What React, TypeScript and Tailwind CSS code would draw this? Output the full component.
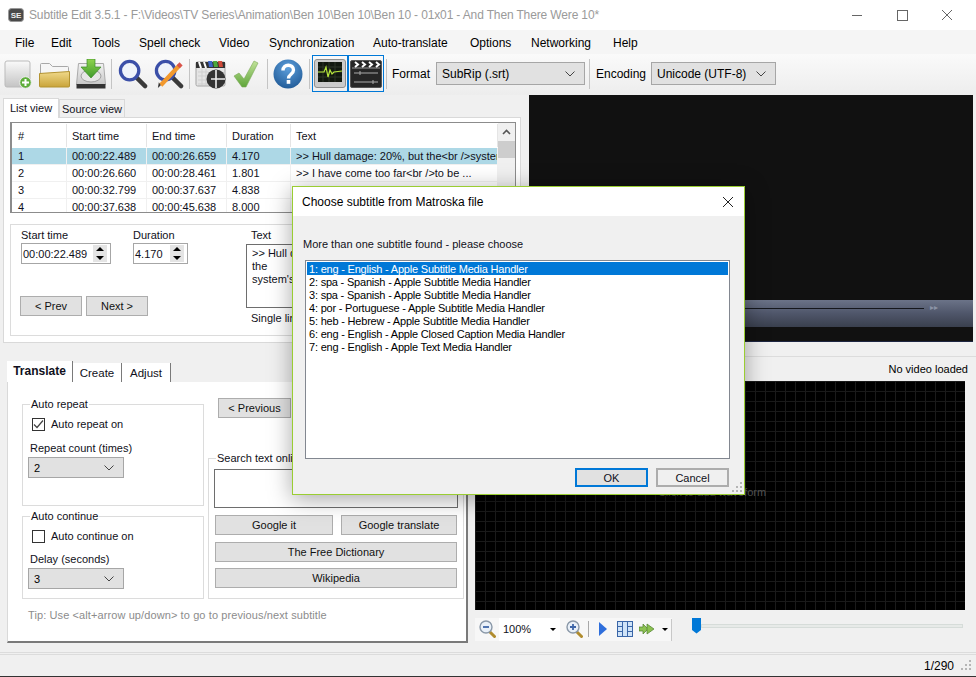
import type { ReactNode } from "react";

const font = "font-['Liberation_Sans',sans-serif]";

function Chevron({ className = "" }: { className?: string }) {
  return (
    <svg width="10" height="6" viewBox="0 0 10 6" className={className}>
      <path d="M0.5 0.5 L5 5 L9.5 0.5" fill="none" stroke="#444" strokeWidth="1" />
    </svg>
  );
}

function Select({ value, className }: { value: string; className: string }) {
  return (
    <div className={`flex items-center justify-between border border-[#a6a6a6] bg-[#e1e1e1] pl-[5px] pr-[9px] text-black ${className}`}>
      <span>{value}</span>
      <Chevron />
    </div>
  );
}

function Btn({ children, className }: { children: ReactNode; className: string }) {
  return (
    <div className={`flex h-[20px] items-center justify-center border border-[#adadad] bg-[#e1e1e1] text-[#111] ${className}`}>
      {children}
    </div>
  );
}

function Sep() {
  return <div className="h-[30px] w-px bg-[#c4c4c4]" />;
}

function Spin({ value, className }: { value: string; className: string }) {
  return (
    <div className={`flex h-[21px] items-center justify-between border border-[#a6a6a6] bg-white pl-[1px] pr-[3px] ${className}`}>
      <span>{value}</span>
      <div className="flex h-[17px] w-[14px] flex-col items-center justify-around bg-[#e4e4e4]">
        <div className="h-0 w-0 border-x-[4px] border-b-[4px] border-x-transparent border-b-black" />
        <div className="h-0 w-0 border-x-[4px] border-t-[4px] border-x-transparent border-t-black" />
      </div>
    </div>
  );
}

function Check({ on }: { on?: boolean }) {
  return (
    <div className="flex h-[13px] w-[13px] items-center justify-center border border-[#333] bg-white">
      {on && (
        <svg width="11" height="11" viewBox="0 0 11 11">
          <path d="M1 5.5 L4 8.5 L10 1.5" fill="none" stroke="#444" strokeWidth="1.2" />
        </svg>
      )}
    </div>
  );
}

function NewIcon() {
  return (
    <svg width="28" height="30" viewBox="0 0 28 30">
      <defs>
        <linearGradient id="nd" x1="0" y1="0" x2="0" y2="1">
          <stop offset="0" stopColor="#fafafa" />
          <stop offset="1" stopColor="#c4c4c4" />
        </linearGradient>
      </defs>
      <rect x="1" y="2" width="25" height="26" rx="2" fill="url(#nd)" stroke="#bbb" />
      <circle cx="21.5" cy="23.5" r="5.8" fill="#5fae3c" stroke="#eee" />
      <path d="M21.5 20v7M18 23.5h7" stroke="#fff" strokeWidth="2" />
    </svg>
  );
}

function FolderIcon() {
  return (
    <svg width="31" height="28" viewBox="0 0 31 28">
      <defs>
        <linearGradient id="fo" x1="0" y1="0" x2="0" y2="1">
          <stop offset="0" stopColor="#f0d98a" />
          <stop offset="1" stopColor="#c9a43a" />
        </linearGradient>
      </defs>
      <path d="M1.5 14V4.5a1 1 0 0 1 1-1h8l3 3h15a1 1 0 0 1 1 1V14" fill="#f6f6f6" stroke="#a8a8a8" />
      <path d="M0.5 13.5 L30.5 11.5 V26a1 1 0 0 1-1 1h-28a1 1 0 0 1-1-1z" fill="url(#fo)" stroke="#b39331" />
    </svg>
  );
}

function DownloadIcon() {
  return (
    <svg width="30" height="30" viewBox="0 0 30 30">
      <defs>
        <linearGradient id="dl" x1="0" y1="0" x2="0" y2="1">
          <stop offset="0" stopColor="#8fd44e" />
          <stop offset="1" stopColor="#3f9a2c" />
        </linearGradient>
        <linearGradient id="dt" x1="0" y1="0" x2="0" y2="1">
          <stop offset="0" stopColor="#f2f2f2" />
          <stop offset="1" stopColor="#c8c8c8" />
        </linearGradient>
      </defs>
      <path d="M2.5 4.5h25l2 21H0.5z" fill="url(#dt)" stroke="#aaa" />
      <ellipse cx="15" cy="17" rx="10" ry="6" fill="#e6e6e6" stroke="#a0a0a0" />
      <path d="M0.5 25h29v4.5H0.5z" fill="#333" />
      <path d="M11 0h8v8h6L15 19 5 8h6z" fill="url(#dl)" stroke="#3b8a2a" strokeWidth="0.7" />
    </svg>
  );
}

function SearchIcon({ pencil }: { pencil?: boolean }) {
  return (
    <svg width="30" height="30" viewBox="0 0 31 31">
      <path d="M19 19 L28 28" stroke="#3a3a3a" strokeWidth="4.5" strokeLinecap="round" />
      <circle cx="12" cy="12" r="9.5" fill="#eef3fb" fillOpacity="0.8" stroke="#3b4fa8" strokeWidth="3.4" />
      {pencil && (
        <g>
          <path d="M7 27 L26 7" stroke="#f2992e" strokeWidth="4.5" />
          <path d="M7 27 L4 30 L5 24z" fill="#333" />
          <path d="M25 8 L28 5" stroke="#d9534a" strokeWidth="4.5" />
        </g>
      )}
    </svg>
  );
}

function SyncIcon() {
  return (
    <svg width="32" height="32" viewBox="0 0 32 32">
      <rect x="1" y="4" width="29" height="24" rx="1.5" fill="#e4e4e4" stroke="#a5a5a5" />
      <path d="M1 4h29v6H1z" fill="#333" />
      <path d="M4 4l2 6M9 4l2 6" stroke="#fff" strokeWidth="2" />
      <path d="M13 3h4l1 6h-4z" fill="#3c66c8" />
      <path d="M18 3h4l1 6h-4z" fill="#4ca83c" />
      <path d="M23 3h4l1 6h-4z" fill="#d04a3a" />
      <path d="M3 14h10M3 18h10M3 22h10M3 26h10M7 11v16M11 11v16" stroke="#cfcfcf" strokeWidth="1" />
      <circle cx="21" cy="21" r="9.5" fill="#333" />
      <path d="M21 12v9h-5M21 21v9M21 21h9" stroke="#eee" strokeWidth="1.6" fill="none" />
    </svg>
  );
}

function CheckIcon() {
  return (
    <svg width="26" height="28" viewBox="0 0 26 28">
      <defs>
        <linearGradient id="ck" x1="0" y1="0" x2="0" y2="1">
          <stop offset="0" stopColor="#c2e39a" />
          <stop offset="1" stopColor="#5fa53a" />
        </linearGradient>
      </defs>
      <path d="M1 16 L6 13 L11 19 L21 1 L25 3 L13 27 L9 27z" fill="url(#ck)" stroke="#7aa858" strokeWidth="0.6" />
    </svg>
  );
}

function HelpIcon() {
  return (
    <svg width="30" height="30" viewBox="0 0 30 30">
      <defs>
        <radialGradient id="hp" cx="0.5" cy="0.3" r="0.8">
          <stop offset="0" stopColor="#5d9fdc" />
          <stop offset="1" stopColor="#1b5490" />
        </radialGradient>
      </defs>
      <circle cx="15" cy="15" r="14.5" fill="url(#hp)" />
      <path d="M10 11.5c0-7 10.5-7 10.5-.5 0 4.5-5 4-5 8.5" fill="none" stroke="#fff" strokeWidth="3.4" />
      <rect x="13.7" y="21" width="3.6" height="3.8" fill="#fff" />
    </svg>
  );
}

function ScopeIcon() {
  return (
    <svg width="32" height="29" viewBox="0 0 32 29">
      <rect x="0.5" y="0.5" width="31" height="28" rx="2.5" fill="#cbcbcb" stroke="#8f8f8f" />
      <rect x="4" y="3" width="24" height="20" fill="#12180f" />
      <path d="M4 8h24M4 13h24M4 18h24M9 3v20M15 3v20M21 3v20" stroke="#2c3528" />
      <path d="M4 13 h6 l2-5 2 10 2-7 2 4 2-2 8-1" fill="none" stroke="#b6e63c" strokeWidth="1.2" />
    </svg>
  );
}

function ClapIcon() {
  return (
    <svg width="32" height="28" viewBox="0 0 32 28">
      <rect x="0.5" y="0.5" width="31" height="27" rx="1.5" fill="#262626" stroke="#555" />
      <path d="M2 8h28" stroke="#999" />
      <path d="M5 2l3 2.5-3 2.5M12 2l3 2.5-3 2.5M19 2l3 2.5-3 2.5M26 2l3 2.5-3 2.5" fill="none" stroke="#fff" strokeWidth="2" />
      <path d="M4 13h24M4 22h24M10 11v4M23 20v4" stroke="#aaa" />
    </svg>
  );
}

function ZoomGlass({ plus }: { plus?: boolean }) {
  return (
    <svg width="17" height="18" viewBox="0 0 17 18">
      <path d="M10 11 L15.5 16.5" stroke="#b08c2e" strokeWidth="3" strokeLinecap="round" />
      <circle cx="7" cy="7" r="6" fill="#e9f0f8" stroke="#8a98a8" strokeWidth="1.4" />
      <path d={plus ? "M4 7h6M7 4v6" : "M4 7h6"} stroke="#3f66a8" strokeWidth="1.8" />
    </svg>
  );
}

function Grip() {
  return (
    <svg width="11" height="11" viewBox="0 0 11 11">
      <path d="M8 0h2v2H8zM4 4h2v2H4zM8 4h2v2H8zM0 8h2v2H0zM4 8h2v2H4zM8 8h2v2H8z" fill="#b5b5b5" />
    </svg>
  );
}

const menus = [
  ["File", "w-[36px]"],
  ["Edit", "w-[41px]"],
  ["Tools", "w-[47px]"],
  ["Spell check", "w-[80px]"],
  ["Video", "w-[50px]"],
  ["Synchronization", "w-[104px]"],
  ["Auto-translate", "w-[97px]"],
  ["Options", "w-[61px]"],
  ["Networking", "w-[82px]"],
  ["Help", "w-[40px]"],
];

const rows = [
  ["1", "00:00:22.489", "00:00:26.659", "4.170", ">> Hull damage: 20%, but the<br />system"],
  ["2", "00:00:26.660", "00:00:28.461", "1.801", ">> I have come too far<br />to be ..."],
  ["3", "00:00:32.799", "00:00:37.637", "4.838", ">> Prepare the<br />escape pod."],
  ["4", "00:00:37.638", "00:00:45.638", "8.000", ">> Launch it now."],
];

const tracks = [
  "1: eng - English - Apple Subtitle Media Handler",
  "2: spa - Spanish - Apple Subtitle Media Handler",
  "3: spa - Spanish - Apple Subtitle Media Handler",
  "4: por - Portuguese - Apple Subtitle Media Handler",
  "5: heb - Hebrew - Apple Subtitle Media Handler",
  "6: eng - English - Apple Closed Caption Media Handler",
  "7: eng - English - Apple Text Media Handler",
];

function ListView() {
  const cols = ["w-[55px] pl-[6px]", "w-[80px] pl-[5px]", "w-[80px] pl-[5px]", "w-[64px] pl-[5px]", "flex-1 pl-[5px] whitespace-nowrap overflow-hidden"];
  return (
    <div className="ml-[6px] mt-[4px] flex h-[91px] w-[506px] border border-l-2 border-[#8c8c8c] bg-white">
      <div className="min-w-0 flex-1 overflow-hidden">
        <div className="flex h-[25px] items-center border-b border-white pt-px">
          {["#", "Start time", "End time", "Duration", "Text"].map((h, i) => (
            <div key={h} className={`flex h-full items-center border-r border-[#e5e5e5] ${cols[i]}`}>{h}</div>
          ))}
        </div>
        {rows.map((r, ri) => (
          <div key={r[0]} className={`flex h-[17px] items-center border-b border-[#f0f0f0] ${ri === 0 ? "bg-[#add8e6]" : ""}`}>
            {r.map((c, i) => (
              <div key={i} className={`flex h-full items-center border-r border-[#f0f0f0] ${cols[i]}`}>{c}</div>
            ))}
          </div>
        ))}
      </div>
      <div className="w-[17px] bg-[#f0f0f0]">
        <div className="flex h-[18px] items-center justify-center">
          <svg width="9" height="6" viewBox="0 0 9 6">
            <path d="M1 5 L4.5 1.5 L8 5" fill="none" stroke="#555" strokeWidth="1.6" />
          </svg>
        </div>
        <div className="h-[17px] bg-[#cdcdcd]" />
      </div>
    </div>
  );
}

function TopLeft() {
  return (
    <div className="h-[262px] pl-[3px] pt-[3px]">
      <div className="flex h-[19px] items-end">
        <div className="relative z-10 flex h-[20px] w-[56px] translate-y-px items-center justify-center border border-b-0 border-[#d9d9d9] bg-white pb-[2px]">List view</div>
        <div className="flex h-[18px] w-[66px] items-center justify-center whitespace-nowrap border border-b-0 border-[#d9d9d9] bg-[#f0f0f0]">Source view</div>
      </div>
      <div className="h-[226px] w-[518px] border border-[#d9d9d9] bg-white">
        <ListView />
        <div className="ml-[6px] mt-[11px] h-[112px] w-[506px] border border-[#dcdcdc] px-[10px] pt-[2px]">
          <div className="flex">
            <div className="w-[112px]">
              <div className="h-[16px] leading-[16px]">Start time</div>
              <Spin value="00:00:22.489" className="w-[90px]" />
            </div>
            <div className="w-[113px]">
              <div className="h-[16px] leading-[16px]">Duration</div>
              <Spin value="4.170" className="w-[55px]" />
            </div>
            <div>
              <div className="ml-[5px] h-[16px] leading-[16px]">Text</div>
              <div className="mt-px h-[64px] w-[200px] border border-[#6e6e6e] px-[5px] pt-[2px] leading-[13px]">
                &gt;&gt; Hull damage: 20%
                <br />
                the
                <br />
                system's
              </div>
              <div className="ml-[5px] mt-[2px]">Single line</div>
            </div>
          </div>
          <div className="-ml-px -mt-[30px] flex gap-[4px]">
            <Btn className="w-[62px]">&lt; Prev</Btn>
            <Btn className="w-[62px]">Next &gt;</Btn>
          </div>
        </div>
      </div>
    </div>
  );
}

function Group({ title, className, children }: { title: string; className: string; children: ReactNode }) {
  return (
    <fieldset className={`border border-[#dcdcdc] ${className}`}>
      <legend className="ml-[2px] px-px leading-[14px]">{title}</legend>
      {children}
    </fieldset>
  );
}

function Bottom() {
  return (
    <div className="pl-[7px] pt-[4px]">
      <div className="flex h-[21px] items-end">
        <div className="flex h-[21px] w-[66px] items-center justify-center border-r border-[#7a7a7a] bg-white pb-px text-[12px] font-bold">Translate</div>
        <div className="flex h-[19px] w-[49px] items-center justify-center border-r border-[#7a7a7a] bg-white text-[11.5px]">Create</div>
        <div className="flex h-[19px] w-[49px] items-center justify-center border-r border-[#7a7a7a] bg-white text-[11.5px]">Adjust</div>
      </div>
      <div className="h-[261px] w-[461px] border-b-2 border-l border-r-2 border-b-[#7a7a7a] border-l-[#d9d9d9] border-r-[#7a7a7a] bg-white pl-[14px] pt-[15px]">
        <div className="flex gap-[4px]">
          <div className="flex w-[182px] flex-col gap-[3px]">
            <Group title="Auto repeat" className="h-[109px] px-[5px]">
              <div className="mt-[5px] flex items-center gap-[6px] pl-[4px]">
                <Check on />
                <span>Auto repeat on</span>
              </div>
              <div className="mt-[8px] pl-[2px] leading-[16px]">Repeat count (times)</div>
              <Select value="2" className="mt-px h-[21px] w-[96px]" />
            </Group>
            <Group title="Auto continue" className="h-[90px] px-[5px]">
              <div className="mt-[5px] flex items-center gap-[6px] pl-[4px]">
                <Check />
                <span>Auto continue on</span>
              </div>
              <div className="mt-[7px] pl-[2px] leading-[16px]">Delay (seconds)</div>
              <Select value="3" className="mt-px h-[21px] w-[96px]" />
            </Group>
          </div>
          <div className="w-[255px] shrink-0">
            <Btn className="ml-[10px] mt-px w-[73px]">&lt; Previous</Btn>
            <Group title="Search text online" className="mt-[33px] h-[148px] px-[5px]">
              <div className="mt-[4px] h-[39px] w-[244px] border border-[#6e6e6e]" />
              <div className="mt-[7px] flex gap-[8px] pl-px">
                <Btn className="w-[118px]">Google it</Btn>
                <Btn className="w-[116px]">Google translate</Btn>
              </div>
              <Btn className="ml-px mt-[7px] w-[242px]">The Free Dictionary</Btn>
              <Btn className="ml-px mt-[6px] w-[242px]">Wikipedia</Btn>
            </Group>
          </div>
        </div>
        <div className="mt-[8px] pl-[6px] tracking-[0.1px] text-[#8c8c8c]">Tip: Use &lt;alt+arrow up/down&gt; to go to previous/next subtitle</div>
      </div>
    </div>
  );
}

function VideoPane() {
  return (
    <div className="h-[247px] w-[444px] bg-[#111]">
      <div className="h-[205px]" />
      <div className="h-[27px] bg-gradient-to-b from-[#6b7388] via-[#4f566a] to-[#3a404e]">
        <div className="flex items-center gap-[6px] pt-[4px]">
          <div className="h-px w-[395px] bg-[#15171d]" />
          <span className="text-[8px] leading-[8px] text-[#8b93a6]">▸▸</span>
        </div>
      </div>
      <div className="h-[14px]" />
      <div className="h-px bg-[#1d2540]" />
    </div>
  );
}

function RightPane() {
  return (
    <div className="min-w-0 flex-1">
      <VideoPane />
      <div className="mt-[14px] h-px w-[504px] -translate-x-[57px] bg-[#dcdcdc]" />
      <div className="flex h-[24px] items-center justify-end pb-px pr-[8px] text-black">No video loaded</div>
      <div className="-ml-[54px] flex h-[229px] w-[490px] items-center justify-center bg-black bg-[linear-gradient(#1a1a1a_1px,transparent_1px),linear-gradient(90deg,#1a1a1a_1px,transparent_1px)] bg-[size:10px_10px] pb-[8px] pr-[16px] text-[#555]">
        Click to add waveform
      </div>
      <div className="-ml-[54px] mt-[7px] flex h-[24px] items-center">
        <div className="flex h-[23px] w-[197px] items-center bg-[#f7f7f7]">
          <div className="ml-[4px]"><ZoomGlass /></div>
          <div className="ml-[3px] flex h-[23px] w-[61px] items-center justify-between bg-white pl-[4px] pr-[4px]">
            <span>100%</span>
            <div className="h-0 w-0 border-x-[3px] border-t-[3px] border-x-transparent border-t-black" />
          </div>
          <div className="ml-[6px]"><ZoomGlass plus /></div>
          <div className="ml-[5px] h-[16px] w-px bg-[#a8a8a8]" />
          <div className="ml-[10px] h-0 w-0 border-y-[7px] border-l-[8px] border-y-transparent border-l-[#2f6fdc]" />
          <svg width="16" height="16" viewBox="0 0 16 16" className="ml-[10px]">
            <rect x="0.5" y="0.5" width="15" height="15" fill="#cfe3f8" stroke="#3a66a8" />
            <path d="M5.5 0v16M10.5 0v16M0 5.5h5M0 10.5h5M11 5.5h5M11 10.5h5" stroke="#3a66a8" />
          </svg>
          <svg width="16" height="12" viewBox="0 0 16 12" className="ml-[6px]">
            <path d="M0 4h4V1l5 5-5 5V8H0z" fill="#8cc152" stroke="#4f7f2c" strokeWidth="0.7" />
            <path d="M8 1l7 5-7 5z" fill="#8cc152" stroke="#4f7f2c" strokeWidth="0.7" />
          </svg>
          <div className="ml-[7px] h-0 w-0 border-x-[3px] border-t-[3px] border-x-transparent border-t-black" />
          <div className="ml-[3px] h-[22px] w-px self-end bg-[#c8c8c8]" />
        </div>
        <div className="ml-[20px] flex w-[271px] items-center self-start pt-px">
          <svg width="9" height="16" viewBox="0 0 9 16" className="relative z-10">
            <path d="M0 0h9v12l-4.5 3.5L0 12z" fill="#0078d7" />
          </svg>
          <div className="h-[4px] flex-1 border border-[#d6dcd9] bg-[#e7eae8]" />
        </div>
      </div>
    </div>
  );
}

function Dialog() {
  return (
    <div className="absolute left-[292px] top-[186px] h-[309px] w-[453px] border border-[#9acd32] bg-[#f0f0f0] shadow-[0_4px_22px_rgba(0,0,0,0.35)]">
      <div className="flex h-[29px] items-center justify-between bg-white pl-[9px] pr-[10px] text-[12px] text-black">
        <span>Choose subtitle from Matroska file</span>
        <svg width="12" height="12" viewBox="0 0 12 12">
          <path d="M1 1l10 10M11 1L1 11" stroke="#222" strokeWidth="1" />
        </svg>
      </div>
      <div className="pl-[10px] pt-[20px] leading-[16px]">More than one subtitle found - please choose</div>
      <div className="ml-[12px] mt-[8px] h-[199px] w-[425px] border border-[#828790] bg-white p-px">
        {tracks.map((t, i) => (
          <div key={t} className={`h-[13px] whitespace-nowrap pl-[2px] pt-px leading-[13px] tracking-[-0.2px] ${i === 0 ? "bg-[#0078d7] text-white" : "text-black"}`}>{t}</div>
        ))}
      </div>
      <div className="mt-[9px] flex gap-[8px] pl-[282px]">
        <div className="flex h-[19px] w-[73px] items-center justify-center border-2 border-[#0078d7] bg-[#e1e1e1]">OK</div>
        <div className="flex h-[19px] w-[73px] items-center justify-center border-2 border-[#adadad] bg-[#f0f0f0]">Cancel</div>
      </div>
      <div className="absolute bottom-[1px] right-[1px]"><Grip /></div>
    </div>
  );
}

export default function App() {
  return (
    <div className={`relative h-[677px] w-[976px] overflow-hidden bg-[#f0f0f0] text-[11px] leading-[16px] text-[#101020] ${font}`}>
      <div className="flex h-[30px] items-center bg-white pl-[8px]">
        <svg width="16" height="16" viewBox="0 0 16 16">
          <rect x="0.5" y="1.5" width="15" height="13" rx="3" fill="#4a4a4a" stroke="#999" />
          <text x="8" y="11" textAnchor="middle" fontSize="8" fontWeight="700" fill="#eee">SE</text>
        </svg>
        <span className="ml-[5px] flex-1 text-[12px] tracking-[-0.14px] text-[#9a9a9a]">Subtitle Edit 3.5.1 - F:\Videos\TV Series\Animation\Ben 10\Ben 10\Ben 10 - 01x01 - And Then There Were 10*</span>
        <svg width="105" height="12" viewBox="0 0 105 12" className="mr-[19px]">
          <path d="M0 6.5h10" stroke="#666" />
          <rect x="45.5" y="1.5" width="10" height="10" fill="none" stroke="#666" />
          <path d="M90 1l10 10M100 1L90 11" stroke="#666" />
        </svg>
      </div>
      <div className="flex h-[24px] items-center bg-[#f5f5f5] pl-[15px] pt-px text-[12px] text-black">
        {menus.map(([m, w]) => (
          <span key={m} className={w}>{m}</span>
        ))}
      </div>
      <div className="flex h-[41px] items-center bg-gradient-to-b from-[#fafafa] to-[#ededed] pb-[2px] pl-[4px] text-[12px]">
        <NewIcon />
        <div className="ml-[7px]"><FolderIcon /></div>
        <div className="ml-[6px]"><DownloadIcon /></div>
        <div className="ml-[5px] mr-[6px]"><Sep /></div>
        <SearchIcon />
        <div className="ml-[6px]"><SearchIcon pencil /></div>
        <div className="ml-[5px] mr-[5px]"><Sep /></div>
        <SyncIcon />
        <div className="ml-[6px]"><CheckIcon /></div>
        <div className="ml-[8px] mr-[5px]"><Sep /></div>
        <HelpIcon />
        <div className="ml-[6px] mr-[2px]"><Sep /></div>
        <div className="flex h-[37px] w-[36px] items-center justify-center border border-[#0078d7]"><ScopeIcon /></div>
        <div className="flex h-[37px] w-[36px] items-center justify-center border border-[#0078d7]"><ClapIcon /></div>
        <div className="ml-[2px]"><Sep /></div>
        <span className="ml-[5px] w-[39px] text-black">Format</span>
        <Select value="SubRip (.srt)" className="ml-[5px] h-[23px] w-[149px]" />
        <div className="ml-[4px]"><Sep /></div>
        <span className="ml-[6px] w-[51px] text-black">Encoding</span>
        <Select value="Unicode (UTF-8)" className="ml-[4px] h-[23px] w-[125px]" />
      </div>
      <div className="flex h-[557px]">
        <div className="w-[529px] shrink-0">
          <TopLeft />
          <Bottom />
        </div>
        <RightPane />
      </div>
      <div className="flex h-[24px] items-center justify-end border-t-[3px] border-double border-[#dcdcdc] pr-[4px]">
        <span className="mr-[7px] text-[12px] text-black">1/290</span>
        <Grip />
      </div>
      <div className="h-px bg-[#333]" />
      <Dialog />
    </div>
  );
}
